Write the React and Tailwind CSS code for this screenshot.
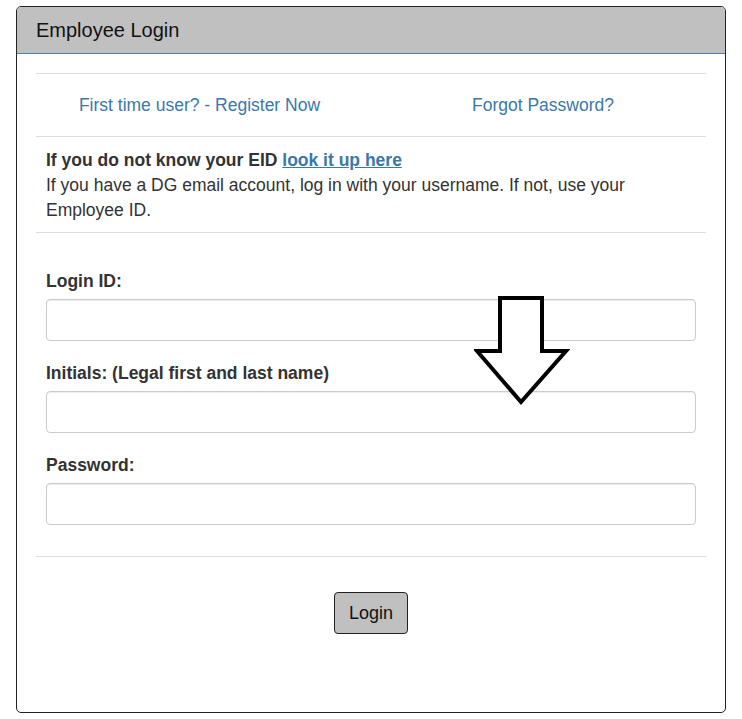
import { useState } from 'react'

function Field({ label, type = 'text' }) {
  return (
    <div className="mt-[20px] first:mt-0">
      <label className="block text-[17.5px] font-bold leading-[24px] text-[#333]">{label}</label>
      <input
        type={type}
        className="mt-[6px] block h-[42px] w-full rounded-[4px] border border-[#ccc] bg-white px-3 shadow-[inset_0_1px_1px_rgba(0,0,0,0.075)] outline-none"
      />
    </div>
  )
}

function DownArrow() {
  return (
    <svg
      className="pointer-events-none absolute left-[474px] top-[296px]"
      width="96"
      height="112"
      viewBox="474 296 96 112"
    >
      <polygon
        points="500,298 542,298 542,351 566,351 521,402 477,351 500,351"
        fill="white"
        stroke="black"
        strokeWidth="4"
        strokeLinejoin="miter"
      />
    </svg>
  )
}

export default function App() {
  const [form] = useState(null)

  return (
    <div className="relative min-h-[719px] bg-white pt-[6px] font-['Liberation_Sans',Arial,sans-serif] text-[#333]">
      <div className="ml-[16px] flex h-[707px] w-[710px] flex-col overflow-hidden rounded-[5px] border border-[#222]">
        <div className="flex h-[47px] items-center border-b border-[#4a7fb0] bg-[#c0c0c0] px-[19px] text-[20px] text-[#111]">
          Employee Login
        </div>

        <div className="px-[19px] pt-[19px]">
          <div className="border-t border-[#ddd]" />
          <div className="grid h-[62px] grid-cols-2 items-center text-[17.5px] text-[#3a78ac]">
            <a href="#" className="-ml-[8px] text-center">First time user? - Register Now</a>
            <a href="#" className="ml-[9px] text-center">Forgot Password?</a>
          </div>
          <div className="border-t border-[#ddd]" />

          <div className="px-[10px] pt-[11px] pb-[9px] text-[17.5px] leading-[25px]">
            <div className="font-bold">
              If you do not know your EID{' '}
              <a href="#" className="text-[#3a78ac] underline">look it up here</a>
            </div>
            <div>If you have a DG email account, log in with your username. If not, use your Employee ID.</div>
          </div>
          <div className="border-t border-[#ddd]" />

          <form className="px-[10px] pt-[36px] pb-[31px]" onSubmit={(e) => e.preventDefault()}>
            <Field label="Login ID:" />
            <Field label="Initials: (Legal first and last name)" />
            <Field label="Password:" type="password" />
          </form>
          <div className="border-t border-[#ddd]" />

          <div className="flex justify-center pt-[35px]">
            <button className="h-[42px] w-[74px] rounded-[4px] border border-[#222] bg-[#c0c0c0] text-[18px] text-[#111]">
              Login
            </button>
          </div>
        </div>
      </div>
      <DownArrow />
    </div>
  )
}
